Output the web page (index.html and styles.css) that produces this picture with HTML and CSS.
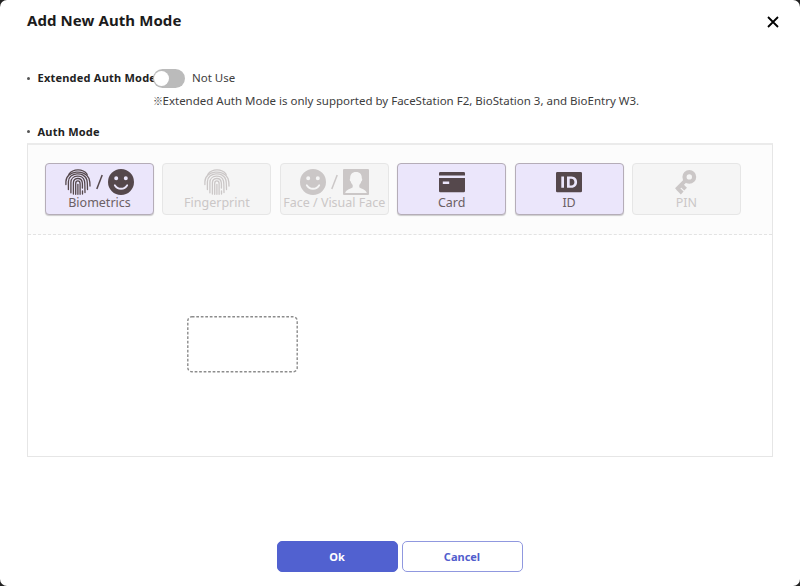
FILE: index.html
```html
<!DOCTYPE html>
<html lang="en">
<head>
<meta charset="utf-8">
<title>Add New Auth Mode</title>
<link rel="stylesheet" href="styles.css">
</head>
<body>
<svg class="symbols" aria-hidden="true">
  <symbol id="finger" viewBox="0 0 26 26">
    <g fill="none" stroke="currentColor" stroke-width="1.3" stroke-linecap="round">
      <path d="M3.8 5.3C8.2-.5 17.8-.5 22.2 5.3"/>
      <path d="M.9 15.5V12.8C.9 1.2 20.4-.2 24 9.5C24.9 12 25 14.5 25 17"/>
      <path d="M3.4 20.5V12.8C3.4 2.8 19.7 2.1 21.9 11C22.7 14 22.3 18 22.5 20.5"/>
      <path d="M5.9 23.8V13.2C5.9 5.7 17.9 5 19.5 12C20.1 15 19.8 18 20 23.5"/>
      <path d="M8.4 25V13.8C8.4 8.4 16.2 8 17.2 13C17.7 16 17.3 17.5 17.4 19M17.5 22V25"/>
      <path d="M10.7 25.3V14.5C10.7 11 15 11 15.1 14.5V25.3"/>
      <path d="M12.9 15.5V25.3"/>
    </g>
  </symbol>
  <symbol id="smile" viewBox="0 0 26 26">
    <path fill="currentColor" fill-rule="evenodd" d="M13 0a13 13 0 1 0 0 26a13 13 0 1 0 0-26ZM8.2 7.2a2 2 0 1 1 0 4a2 2 0 1 1 0-4ZM17.8 7.2a2 2 0 1 1 0 4a2 2 0 1 1 0-4Z"/>
    <path class="cut" d="M6.8 16.2C9.5 20.9 16.5 20.9 19.2 16.2" fill="none" stroke-width="1.8" stroke-linecap="round"/>
  </symbol>
  <symbol id="portrait" viewBox="0 0 26 26">
    <rect width="26" height="26" rx="1" fill="currentColor"/>
    <path class="cut-fill" d="M13 3C8.9 3 7 5.7 7.2 9.2C6.4 10 6.8 12 7.8 12.5C8.1 14.3 9 15.2 9.7 16V18.2C8.4 19.9 3 20 2.2 24H23.8C23 20 17.6 19.9 16.3 18.2V16C17 15.2 17.9 14.3 18.2 12.5C19.2 12 19.6 10 18.8 9.2C19 5.7 17.1 3 13 3Z"/>
  </symbol>
</svg>
<main class="dialog">
  <header class="head">
    <h1>Add New Auth Mode</h1>
    <button class="close" aria-label="Close"><svg viewBox="0 0 12 12" width="12" height="12"><path d="M1 1L11 11M11 1L1 11" stroke="#000" stroke-width="1.8"/></svg></button>
  </header>
  <section class="extended">
    <h2 class="label">Extended Auth Mode</h2>
    <div class="setting">
      <div class="switch-row"><span class="switch"></span><span class="state">Not Use</span></div>
      <p class="note"><span class="mark">※</span>Extended Auth Mode is only supported by FaceStation F2, BioStation 3, and BioEntry W3.</p>
    </div>
  </section>
  <h2 class="label auth-label">Auth Mode</h2>
  <section class="panel">
    <div class="modes">
      <div class="mode on"><div class="icons"><svg class="ic"><use href="#finger"/></svg><svg class="slash" viewBox="0 0 7 16"><path d="M6.2 1L.8 15" stroke="currentColor" stroke-width="1.5"/></svg><svg class="ic"><use href="#smile"/></svg></div><span>Biometrics</span></div>
      <div class="mode"><div class="icons"><svg class="ic"><use href="#finger"/></svg></div><span>Fingerprint</span></div>
      <div class="mode"><div class="icons"><svg class="ic"><use href="#smile"/></svg><svg class="slash" viewBox="0 0 7 16"><path d="M6.2 1L.8 15" stroke="currentColor" stroke-width="1.5"/></svg><svg class="ic"><use href="#portrait"/></svg></div><span>Face / Visual Face</span></div>
      <div class="mode on"><div class="icons"><svg class="ic" viewBox="0 0 26 26"><path fill="currentColor" fill-rule="evenodd" d="M1.2 3H24.8Q26 3 26 4.2V6.6H0V4.2Q0 3 1.2 3ZM0 8.9H26V22Q26 23.3 24.7 23.3H1.3Q0 23.3 0 22ZM3.8 12.5V15.1H10.2V12.5Z"/></svg></div><span>Card</span></div>
      <div class="mode on"><div class="icons"><svg class="ic" viewBox="0 0 26 26"><path fill="currentColor" fill-rule="evenodd" d="M1.3 3H24.7Q26 3 26 4.3V22Q26 23.3 24.7 23.3H1.3Q0 23.3 0 22V4.3Q0 3 1.3 3ZM5.3 7.5V18.8H8V7.5ZM11 7.5V18.8H15.5C23 18.8 23 7.5 15.5 7.5ZM13.7 9.7H15.2C19.5 9.7 19.5 16.6 15.2 16.6H13.7Z"/></svg></div><span>ID</span></div>
      <div class="mode"><div class="icons"><svg class="ic" viewBox="0 0 26 26"><circle cx="16.3" cy="7.9" r="4.8" fill="none" stroke="currentColor" stroke-width="4.2"/><path d="M12.9 11.1L3.4 20.6M4.4 19.2L9.2 24M8.2 15.8L12.6 20.2" fill="none" stroke="currentColor" stroke-width="3.9"/></svg></div><span>PIN</span></div>
    </div>
    <div class="canvas"><svg class="slot" viewBox="0 0 111 57"><rect x=".8" y=".8" width="109.4" height="55" rx="4" fill="none" stroke="#8c8c8c" stroke-width="1.4" stroke-dasharray="2.7 1.8"/></svg></div>
  </section>
  <footer class="actions"><button class="ok">Ok</button><button class="cancel">Cancel</button></footer>
</main>
</body>
</html>
```
FILE: styles.css
```css
* { box-sizing: border-box; margin: 0; }
body { background: #222; font-family: "Noto Sans", "Noto Sans CJK JP", sans-serif; color: #333; overflow: hidden; }
button { font: inherit; padding: 0; }
.symbols { display: none; }
.dialog { width: 800px; height: 586px; padding: 0 27px; background: #fff; border-radius: 7px; }
.head { height: 67px; display: flex; justify-content: space-between; align-items: flex-start; }
h1 { font-size: 15px; line-height: 20px; margin-top: 10px; letter-spacing: .08px; color: #1b1b1b; }
.close { border: 0; background: none; margin: 16px -6px 0 0; width: 12px; height: 12px; }
.close svg { display: block; }
.extended { display: flex; height: 56px; }
.label { display: flex; align-items: center; gap: 7.5px; font-size: 11px; line-height: 16px; height: 22px; letter-spacing: .22px; white-space: nowrap; color: #222; }
.label::before { content: ""; flex: none; width: 3px; height: 3px; border-radius: 50%; background: #555; }
.extended .label { width: 126px; flex: none; }
.setting { flex: 1; position: relative; font-size: 11.5px; color: #3d3d3d; }
.switch-row { display: flex; align-items: center; gap: 7px; height: 22px; }
.state { line-height: 16px; margin-top: -1px; }
.switch { width: 32px; height: 19px; border-radius: 10px; background: #bbb; padding: 2px 1px; }
.switch::before { content: ""; display: block; width: 15px; height: 15px; border-radius: 50%; background: #fff; }
.note { display: flex; line-height: 16px; margin-top: 4px; white-space: nowrap; }
.mark { width: 9.5px; overflow: hidden; font-size: 10px; font-family: "Noto Sans CJK JP", sans-serif; }
.auth-label { height: 17px; }
.panel { height: 314px; margin-top: 3px; border: 1px solid #e6e6e6; border-top: 2px solid #ebebeb; }
.modes { height: 90px; padding: 18px 0 0 17px; display: flex; gap: 8.4px; background: #fcfcfc; border-bottom: 1px dashed #e3e3e3; }
.mode { width: 109px; height: 52px; border: 1px solid #e6e6e6; border-radius: 4px; background: #f5f5f5; color: #cbc7c7; --bg: #f5f5f5; font-size: 12.5px; line-height: 16px; text-align: center; white-space: nowrap; padding-top: 5px; }
.mode span { display: block; margin: -1px -2px 0; }
.mode.on { border-color: #b5adb8; background: #ebe6fb; color: #55484c; --bg: #ebe6fb; box-shadow: 0 1px 1px #ccc; }
.mode.on span { color: #6b6064; }
.icons { height: 26px; display: flex; justify-content: center; align-items: center; gap: 5px; margin-bottom: 1px; }
.ic { width: 26px; height: 26px; }
.slash { width: 7px; height: 16px; }
.cut { stroke: var(--bg); }
.cut-fill { fill: var(--bg); }
.canvas { padding: 81px 0 0 159px; }
.slot { display: block; width: 111px; height: 57px; }
.actions { display: flex; gap: 4px; justify-content: center; padding: 84px 1px 0 0; }
.actions button { width: 121px; height: 31px; border: 1px solid #9098df; border-radius: 5px; background: #fff; color: #515dcd; font-size: 11px; font-weight: 700; }
.actions .ok { background: #5161d0; border-color: #5161d0; color: #fff; }
```
